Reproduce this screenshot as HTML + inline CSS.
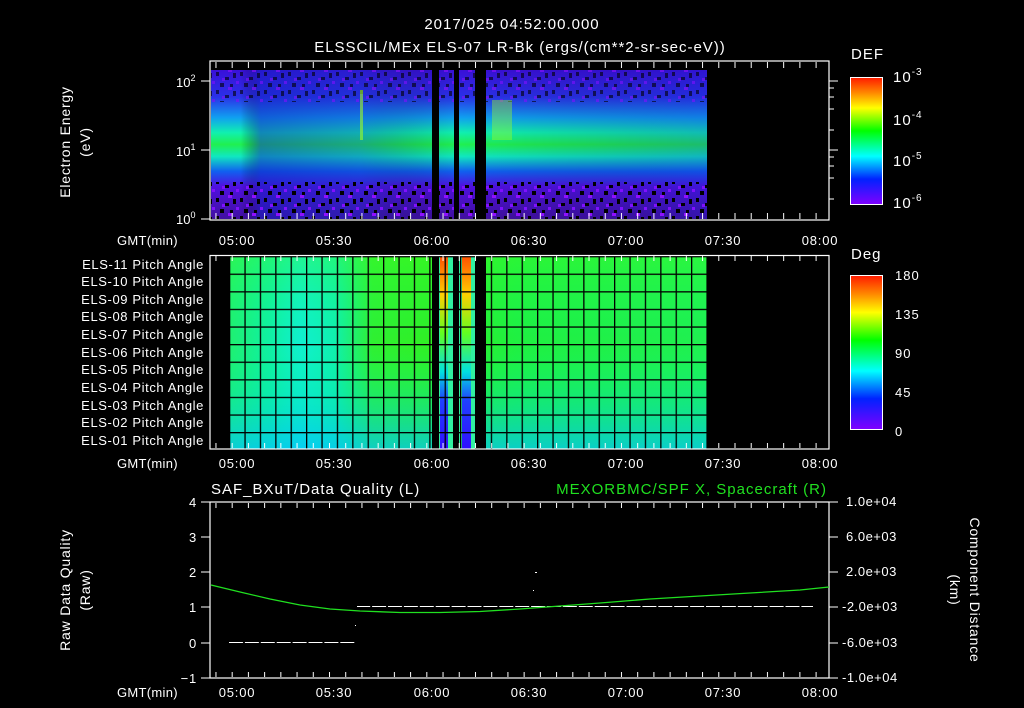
<!DOCTYPE html>
<html><head><meta charset="utf-8"><style>
html,body{margin:0;padding:0;background:#000;width:1024px;height:708px;overflow:hidden}
svg{display:block}
text{font-family:"Liberation Sans",sans-serif;fill:#fff;font-size:13px}
.t{font-size:15px;letter-spacing:1px}
.ax{font-size:14px;letter-spacing:0.8px}
</style></head><body>
<svg width="1024" height="708" viewBox="0 0 1024 708" xmlns="http://www.w3.org/2000/svg">
<defs>
<linearGradient id="cb" x1="0" y1="0" x2="0" y2="1">
<stop offset="0" stop-color="#ff1a00"/><stop offset="0.12" stop-color="#ff8800"/><stop offset="0.24" stop-color="#ffff00"/><stop offset="0.42" stop-color="#00ff00"/><stop offset="0.62" stop-color="#00ffff"/><stop offset="0.8" stop-color="#0022ff"/><stop offset="1" stop-color="#8000ff"/>
</linearGradient>
<linearGradient id="spv" x1="0" y1="0" x2="0" y2="1">
<stop offset="0" stop-color="#3a10d8"/><stop offset="0.18" stop-color="#2a30e8"/><stop offset="0.32" stop-color="#10a0f0"/><stop offset="0.42" stop-color="#10f0b0"/><stop offset="0.5" stop-color="#20f050"/><stop offset="0.58" stop-color="#10e8c0"/><stop offset="0.68" stop-color="#1060f0"/><stop offset="0.78" stop-color="#5010e0"/><stop offset="1" stop-color="#4010a0"/>
</linearGradient>
<linearGradient id="sph" x1="0" y1="0" x2="1" y2="0">
<stop offset="0" stop-color="#000" stop-opacity="0"/><stop offset="0.06" stop-color="#000" stop-opacity="0"/><stop offset="0.1" stop-color="#1020c0" stop-opacity="0.5"/><stop offset="0.3" stop-color="#1030c0" stop-opacity="0.35"/><stop offset="0.5" stop-color="#000" stop-opacity="0"/><stop offset="1" stop-color="#1020c0" stop-opacity="0.25"/>
</linearGradient>
<pattern id="noise" x="0" y="0" width="24" height="18" patternUnits="userSpaceOnUse">
<rect x="0" y="0" width="3" height="4" fill="#000"/><rect x="9" y="5" width="4" height="3" fill="#000"/><rect x="17" y="1" width="3" height="5" fill="#000"/><rect x="4" y="11" width="4" height="4" fill="#000"/><rect x="14" y="12" width="3" height="3" fill="#000"/><rect x="20" y="9" width="3" height="3" fill="#8010ff"/><rect x="6" y="6" width="3" height="3" fill="#8010ff"/><rect x="12" y="15" width="4" height="3" fill="#9010ff"/>
</pattern>
<linearGradient id="pah" x1="0" y1="0" x2="1" y2="0">
<stop offset="0" stop-color="#20f070"/><stop offset="0.08" stop-color="#10f0a0"/><stop offset="0.15" stop-color="#10f0d0"/><stop offset="0.22" stop-color="#10f0b0"/><stop offset="0.3" stop-color="#30f030"/><stop offset="0.45" stop-color="#30f020"/><stop offset="0.6" stop-color="#20f040"/><stop offset="1" stop-color="#20f050"/>
</linearGradient>
<linearGradient id="pav" x1="0" y1="0" x2="0" y2="1">
<stop offset="0" stop-color="#40ff20" stop-opacity="0.35"/><stop offset="0.45" stop-color="#00ff80" stop-opacity="0"/><stop offset="1" stop-color="#00c0ff" stop-opacity="0.7"/>
</linearGradient>
<linearGradient id="hot" x1="0" y1="0" x2="0" y2="1">
<stop offset="0" stop-color="#ff5000"/><stop offset="0.2" stop-color="#ffd000"/><stop offset="0.4" stop-color="#60ff20"/><stop offset="0.6" stop-color="#00e0e0"/><stop offset="0.75" stop-color="#2040ff"/><stop offset="1" stop-color="#3010ff"/>
</linearGradient>
<pattern id="tk" x="4.6" y="0" width="16.22" height="10" patternUnits="userSpaceOnUse"><rect x="0" y="0" width="1" height="10" fill="#fff"/></pattern>
<pattern id="gv" x="229" y="0" width="15.4" height="10" patternUnits="userSpaceOnUse"><rect x="0" y="0" width="1.3" height="10" fill="#000"/></pattern>
<pattern id="gh" x="0" y="256" width="10" height="17.6" patternUnits="userSpaceOnUse"><rect x="0" y="0" width="10" height="1.3" fill="#000"/></pattern>
<pattern id="dash" x="229" y="0" width="15.9" height="2" patternUnits="userSpaceOnUse"><rect x="0" y="0" width="14" height="1" fill="#fff"/></pattern>
</defs>

<text x="512" y="29" text-anchor="middle" class="t">2017/025 04:52:00.000</text>
<text x="520" y="52" text-anchor="middle" class="t">ELSSCIL/MEx ELS-07 LR-Bk  (ergs/(cm**2-sr-sec-eV))</text>

<!-- TOP PANEL -->
<rect x="211" y="70" width="496" height="149" fill="url(#spv)"/>
<rect x="211" y="70" width="496" height="149" fill="url(#sph)"/>
<rect x="211" y="70" width="496" height="32" fill="url(#noise)" opacity="0.6"/>
<rect x="211" y="182" width="496" height="37" fill="url(#noise)"/>
<rect x="360" y="90" width="3" height="50" fill="#a0ff20" opacity="0.6"/>
<rect x="492" y="100" width="20" height="40" fill="#a0ff20" opacity="0.4"/>
<rect x="432" y="70" width="7" height="149" fill="#000"/>
<rect x="454" y="70" width="5" height="149" fill="#000"/>
<rect x="475" y="70" width="11" height="149" fill="#000"/>
<rect x="210" y="61" width="619" height="159" fill="none" stroke="#fff" stroke-width="1.2"/>
<rect x="211" y="62" width="617" height="6" fill="url(#tk)"/>
<rect x="211" y="213" width="617" height="6" fill="url(#tk)"/>
<g stroke="#fff" stroke-width="1">
<line x1="201" y1="81" x2="210" y2="81"/><line x1="201" y1="150" x2="210" y2="150"/><line x1="201" y1="219" x2="210" y2="219"/>
<line x1="829" y1="81" x2="838" y2="81"/><line x1="829" y1="150" x2="838" y2="150"/>
<line x1="829" y1="88" x2="834" y2="88"/><line x1="829" y1="97" x2="834" y2="97"/><line x1="829" y1="109" x2="834" y2="109"/><line x1="829" y1="130" x2="834" y2="130"/><line x1="829" y1="157" x2="834" y2="157"/><line x1="829" y1="166" x2="834" y2="166"/><line x1="829" y1="178" x2="834" y2="178"/><line x1="829" y1="199" x2="834" y2="199"/>
</g>
<text x="176" y="87" font-size="13">10<tspan dy="-6" font-size="9">2</tspan></text>
<text x="176" y="156" font-size="13">10<tspan dy="-6" font-size="9">1</tspan></text>
<text x="176" y="224" font-size="13">10<tspan dy="-6" font-size="9">0</tspan></text>
<text transform="translate(70,142) rotate(-90)" text-anchor="middle" class="ax">Electron Energy</text>
<text transform="translate(90,142) rotate(-90)" text-anchor="middle" class="ax">(eV)</text>
<g class="ax">
<text x="117" y="245" font-size="13" letter-spacing="0.3">GMT(min)</text>
<text x="237" y="245" text-anchor="middle">05:00</text><text x="334" y="245" text-anchor="middle">05:30</text><text x="432" y="245" text-anchor="middle">06:00</text><text x="529" y="245" text-anchor="middle">06:30</text><text x="626" y="245" text-anchor="middle">07:00</text><text x="723" y="245" text-anchor="middle">07:30</text><text x="820" y="245" text-anchor="middle">08:00</text>
</g>
<text x="851" y="59" class="t">DEF</text>
<rect x="850.5" y="77.5" width="32" height="127" fill="url(#cb)" stroke="#fff"/>
<text x="893" y="82" class="t">10<tspan dy="-7" font-size="10">-3</tspan></text>
<text x="893" y="125" class="t">10<tspan dy="-7" font-size="10">-4</tspan></text>
<text x="893" y="166" class="t">10<tspan dy="-7" font-size="10">-5</tspan></text>
<text x="893" y="208" class="t">10<tspan dy="-7" font-size="10">-6</tspan></text>

<!-- MIDDLE PANEL -->
<rect x="229" y="256" width="478" height="193" fill="url(#pah)"/>
<rect x="229" y="256" width="478" height="193" fill="url(#pav)"/>
<rect x="439" y="256" width="14" height="193" fill="#30f0a0"/>
<rect x="459" y="256" width="16" height="193" fill="#30f0a0"/>
<rect x="440" y="256" width="8" height="193" fill="url(#hot)"/>
<rect x="462" y="256" width="9" height="193" fill="url(#hot)"/>
<rect x="432" y="256" width="7" height="193" fill="#000"/>
<rect x="453" y="256" width="6" height="193" fill="#000"/>
<rect x="475" y="256" width="11" height="193" fill="#000"/>
<rect x="229" y="256" width="478" height="193" fill="url(#gv)"/>
<rect x="229" y="256" width="478" height="193" fill="url(#gh)"/>
<rect x="210" y="255.5" width="619" height="193.5" fill="none" stroke="#fff" stroke-width="1.2"/>
<rect x="211" y="256" width="617" height="5" fill="url(#tk)"/>
<rect x="211" y="443" width="617" height="5" fill="url(#tk)"/>
<g font-size="13" letter-spacing="0.6" text-anchor="end">
<text x="204" y="269">ELS-11 Pitch Angle</text><text x="204" y="286">ELS-10 Pitch Angle</text><text x="204" y="304">ELS-09 Pitch Angle</text><text x="204" y="321">ELS-08 Pitch Angle</text><text x="204" y="339">ELS-07 Pitch Angle</text><text x="204" y="357">ELS-06 Pitch Angle</text><text x="204" y="374">ELS-05 Pitch Angle</text><text x="204" y="392">ELS-04 Pitch Angle</text><text x="204" y="410">ELS-03 Pitch Angle</text><text x="204" y="427">ELS-02 Pitch Angle</text><text x="204" y="445">ELS-01 Pitch Angle</text>
</g>
<g class="ax">
<text x="117" y="468" font-size="13" letter-spacing="0.3">GMT(min)</text>
<text x="237" y="468" text-anchor="middle">05:00</text><text x="334" y="468" text-anchor="middle">05:30</text><text x="432" y="468" text-anchor="middle">06:00</text><text x="529" y="468" text-anchor="middle">06:30</text><text x="626" y="468" text-anchor="middle">07:00</text><text x="723" y="468" text-anchor="middle">07:30</text><text x="820" y="468" text-anchor="middle">08:00</text>
</g>
<text x="851" y="259" class="t">Deg</text>
<rect x="850.5" y="275.5" width="32" height="154" fill="url(#cb)" stroke="#fff"/>
<g class="t"><text x="895" y="280">180</text><text x="895" y="319">135</text><text x="895" y="358">90</text><text x="895" y="397">45</text><text x="895" y="436">0</text></g>

<!-- BOTTOM PANEL -->
<text x="211" y="494" class="t">SAF_BXuT/Data Quality (L)</text>
<text x="827" y="494" class="t" text-anchor="end" style="fill:#20e020">MEXORBMC/SPF X, Spacecraft (R)</text>
<rect x="210" y="502" width="619" height="176" fill="none" stroke="#fff" stroke-width="1.2"/>
<rect x="211" y="503" width="617" height="5" fill="url(#tk)"/>
<rect x="211" y="672" width="617" height="5" fill="url(#tk)"/>
<g stroke="#fff" stroke-width="1">
<line x1="201" y1="502" x2="210" y2="502"/><line x1="201" y1="537" x2="210" y2="537"/><line x1="201" y1="572" x2="210" y2="572"/><line x1="201" y1="607" x2="210" y2="607"/><line x1="201" y1="643" x2="210" y2="643"/><line x1="201" y1="678" x2="210" y2="678"/>
<line x1="829" y1="502" x2="838" y2="502"/><line x1="829" y1="537" x2="838" y2="537"/><line x1="829" y1="572" x2="838" y2="572"/><line x1="829" y1="607" x2="838" y2="607"/><line x1="829" y1="643" x2="838" y2="643"/><line x1="829" y1="678" x2="838" y2="678"/>
</g>
<g class="ax" text-anchor="end"><text x="197" y="507">4</text><text x="197" y="542">3</text><text x="197" y="577">2</text><text x="197" y="612">1</text><text x="197" y="648">0</text><text x="197" y="683">−1</text></g>
<g font-size="13" letter-spacing="0.5"><text x="846" y="506">1.0e+04</text><text x="846" y="541">6.0e+03</text><text x="846" y="576">2.0e+03</text><text x="842" y="611">-2.0e+03</text><text x="842" y="647">-6.0e+03</text><text x="842" y="682">-1.0e+04</text></g>
<rect x="229" y="642" width="127" height="1.2" fill="url(#dash)"/>
<rect x="357" y="606" width="456" height="1.2" fill="url(#dash)"/>
<rect x="355" y="625" width="1" height="1" fill="#fff"/><rect x="535" y="572" width="2" height="1" fill="#fff"/><rect x="533" y="590" width="1" height="1" fill="#fff"/>
<polyline fill="none" stroke="#20e020" stroke-width="1.3" points="211,585 240,592 270,599 300,605 330,609 360,611 400,612.5 440,612.5 480,611.5 520,609 560,606 600,603 650,599 700,596 750,593 800,590 829,587"/>
<text transform="translate(70,590) rotate(-90)" text-anchor="middle" class="ax">Raw Data Quality</text>
<text transform="translate(90,590) rotate(-90)" text-anchor="middle" class="ax">(Raw)</text>
<text transform="translate(970,590) rotate(90)" text-anchor="middle" class="ax">Component Distance</text>
<text transform="translate(950,590) rotate(90)" text-anchor="middle" class="ax">(km)</text>
<g class="ax">
<text x="117" y="697" font-size="13" letter-spacing="0.3">GMT(min)</text>
<text x="237" y="697" text-anchor="middle">05:00</text><text x="334" y="697" text-anchor="middle">05:30</text><text x="432" y="697" text-anchor="middle">06:00</text><text x="529" y="697" text-anchor="middle">06:30</text><text x="626" y="697" text-anchor="middle">07:00</text><text x="723" y="697" text-anchor="middle">07:30</text><text x="820" y="697" text-anchor="middle">08:00</text>
</g>
</svg>
</body></html>
